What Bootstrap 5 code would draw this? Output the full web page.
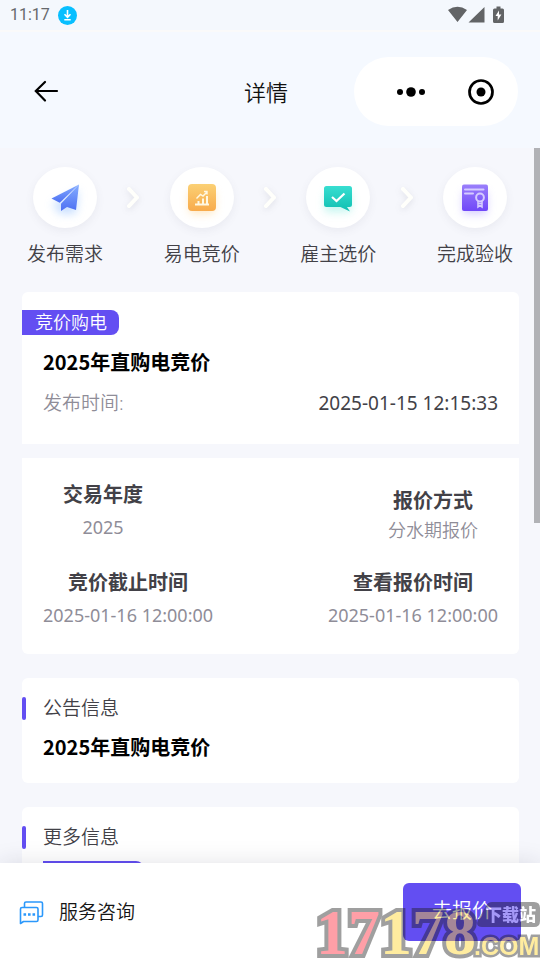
<!DOCTYPE html>
<html lang="zh-CN">
<head>
<meta charset="utf-8">
<meta name="viewport" content="width=device-width, initial-scale=1">
<title>详情</title>
<link href="https://cdn.jsdelivr.net/npm/bootstrap@5.3.0/dist/css/bootstrap.min.css" rel="stylesheet">
<style>
  :root { --brand: #634ef2; --page: #f6f7fc; --bar: #f5f9ff; --ink: #424147; --soft: #8f8d98; }
  body { font-family: "Noto Sans", "Noto Sans CJK SC", sans-serif; font-size: 19px; line-height: 28px; color: var(--ink); background: var(--page); }
  .status-bar { height: 32px; background: #f4f8fd; border-bottom: 2px solid #fafafa; padding: 0 36px 0 10px; color: #66696c; }
  .clock { font: 400 16px/30px Roboto, sans-serif; }
  .app-bar { display: grid; grid-template-columns: 1fr auto 1fr; background: var(--bar); padding: 25px 22px 22px 14px; }
  .page-title { font-size: 22px; line-height: 32px; font-weight: 350; color: #111; }
  .capsule { width: 164px; height: 69px; background: #fff; border-radius: 35px; }
  .plain { border: 0; background: none; padding: 0; line-height: 1; color: #000; }
  .content { padding: 19px 21px 0 22px; }
  .scroll-thumb { top: 0; right: 0; width: 6px; height: 52.5%; background: #b1b2b6; }
  .steps { padding: 0 6px 0 5px; margin-bottom: 24px; }
  .step-dot { width: 64px; height: 61px; border-radius: 50%; background: #fff; box-shadow: 0 3px 8px rgba(90, 90, 120, .08); }
  .step-dot svg { overflow: visible; }
  .step-name { margin-top: 12px; font-weight: 350; }
  .arrow { margin-top: 18px; overflow: visible; filter: drop-shadow(0 2px 3px rgba(80, 80, 100, .14)); }
  .panel { background: #fff; border-radius: 6px; }
  .panel-top { border-radius: 6px 6px 0 0; padding: 18px 0 27px; margin-bottom: 14px; }
  .panel-facts { border-radius: 0 0 6px 6px; padding: 21px 21px 23px; margin-bottom: 24px; }
  .tag { display: inline-block; background: var(--brand); color: #fff; font-size: 18px; line-height: 25px; font-weight: 350; padding: 0 12px 0 13px; border-radius: 0 8px 8px 0; }
  .tag-blank { width: 101px; height: 25px; background: var(--brand); border-radius: 0 8px 8px 0; }
  .inset { padding: 0 21px; }
  .headline { font: 700 20px/30px "Noto Sans CJK SC", sans-serif; color: #000; margin: 0; }
  .muted { color: var(--soft); font-weight: 350; }
  .fact { text-align: center; }
  .fact dt { font-size: 20px; font-weight: 700; line-height: 32px; padding: 0 20px; }
  .fact dd { font-size: 18px; line-height: 32px; color: var(--soft); margin: 0; }
  .fact-tight dd { line-height: 26px; padding: 0 20px; font-weight: 350; }
  .panel-note { padding: 16px 0 21px; margin-bottom: 24px; }
  .note-name { font-size: 19px; line-height: 28px; font-weight: 350; margin: 0 0 10px; padding-right: 21px; gap: 17px; }
  .note-name::before { content: ""; width: 4px; height: 23px; background: var(--brand); border-radius: 2px; }
  .action-bar { background: #fff; padding: 20px 19px 19px; box-shadow: 0 0 22px rgba(30, 30, 60, .13); z-index: 2; }
  .ask { font-size: 19px; line-height: 28px; font-weight: 350; color: #151515; gap: 15px; }
  .offer { background: var(--brand); border: 0; color: #fff; border-radius: 6px; font-size: 20px; line-height: 30px; font-weight: 350; padding: 13px 29px 15px; }
  .stamp { right: 0; bottom: 0; width: 225px; height: 62px; opacity: .42; pointer-events: none; z-index: 3; }
</style>
</head>
<body>
<div class="vh-100 d-flex flex-column overflow-hidden position-relative">
  <div class="status-bar d-flex align-items-center justify-content-between flex-shrink-0">
    <div class="d-flex align-items-center gap-2">
      <span class="clock">11:17</span>
      <svg width="19" height="19" viewBox="0 0 19 19"><circle cx="9.500" cy="9.500" r="9.500" fill="#07bfff"/><path d="M9.500 4v7M6.500 8.300l3 3 3-3M6.300 13.700h6.400" fill="none" stroke="#fff" stroke-width="1.600"/></svg>
    </div>
    <svg width="56" height="18" viewBox="0 0 56 18" fill="#626466"><path d="M0 4Q9.500-2.500 19 4L9.500 16zM36.500 1v15.500h-16z"/><path d="M46.500 2.500h2V.500h4v2h2q1.500 0 1.500 1.500v11.500q0 1.500-1.500 1.500h-8Q45 17 45 15.500V4q0-1.500 1.500-1.500z"/><path d="M51 4.500l-3.500 5.500h2.200v4.500l3.700-6h-2.400z" fill="#fff"/></svg>
  </div>

  <header class="app-bar align-items-center flex-shrink-0">
    <button class="plain text-start ps-3" type="button" aria-label="返回">
      <svg width="32" height="24" viewBox="0 0 32 24" fill="none" stroke="#000" stroke-width="2.200" stroke-linecap="round"><path d="M6 11h21M15 2L5.800 11 15 20.500"/></svg>
    </button>
    <h1 class="page-title m-0">详情</h1>
    <div class="capsule d-flex align-items-center justify-content-between ms-auto ps-4">
      <button class="plain ms-3 ps-0" type="button" aria-label="更多"><svg width="34" height="28" viewBox="0 0 34 28"><circle cx="6" cy="14" r="3"/><circle cx="17" cy="14" r="4.800"/><circle cx="28" cy="14" r="3"/></svg></button>
      <button class="plain me-4" type="button" aria-label="关闭"><svg width="26" height="26" viewBox="0 0 26 26"><circle cx="13" cy="13" r="11.500" fill="none" stroke="#000" stroke-width="2.700"/><circle cx="13" cy="13" r="4.500"/></svg></button>
    </div>
  </header>

  <div class="flex-grow-1 overflow-hidden position-relative">
    <main class="content">
      <div class="steps d-flex justify-content-between align-items-start">
        <div class="d-flex flex-column align-items-center">
          <div class="step-dot d-flex align-items-center justify-content-center">
            <svg width="28" height="28" viewBox="0 0 28 28"><defs><linearGradient id="plane" x2="0" y2="1"><stop stop-color="#85adff"/><stop offset="1" stop-color="#4d70f3"/></linearGradient><filter id="soft" x="-50%" y="-50%" width="200%" height="200%"><feGaussianBlur stdDeviation="4"/></filter></defs><path d="M1 20L28 6 25 30H9z" fill="#b5d4ff" opacity=".7" filter="url(#soft)"/><path d="M28 .500L.500 14.500 8.700 18.700z" fill="url(#plane)"/><path d="M28 .500L10 19.700V27l6-4 9 3z" fill="url(#plane)"/></svg>
          </div>
          <div class="step-name">发布需求</div>
        </div>
        <svg class="arrow" width="14" height="24" viewBox="0 0 14 24" fill="none" stroke="#fffffb" stroke-width="4" stroke-linecap="round" stroke-linejoin="round"><path d="M3 4l8 8.500L3 21"/></svg>
        <div class="d-flex flex-column align-items-center">
          <div class="step-dot d-flex align-items-center justify-content-center">
            <svg width="28" height="28" viewBox="0 0 28 28"><defs><linearGradient id="gold" x2="0" y2="1"><stop stop-color="#fbd074"/><stop offset="1" stop-color="#f8ab4c"/></linearGradient></defs><rect x="1" y="6" width="26" height="24" rx="5" fill="#ffd99b" opacity=".6" filter="url(#soft)"/><rect width="28" height="27" rx="4" fill="url(#gold)"/><path d="M7 20.500h14M10.500 20v-3M15 20v-5.500M19 20v-8" fill="none" stroke="#fff8e2" stroke-width="2"/><path d="M8.500 14.500l4-4 2.500 1.500 4-4M16 7.500h3v3" fill="none" stroke="#fff8e2" stroke-width="1.400"/></svg>
          </div>
          <div class="step-name">易电竞价</div>
        </div>
        <svg class="arrow" width="14" height="24" viewBox="0 0 14 24" fill="none" stroke="#fffffb" stroke-width="4" stroke-linecap="round" stroke-linejoin="round"><path d="M3 4l8 8.500L3 21"/></svg>
        <div class="d-flex flex-column align-items-center">
          <div class="step-dot d-flex align-items-center justify-content-center">
            <svg width="28" height="26" viewBox="0 0 28 26"><defs><linearGradient id="teal" x2="0" y2="1"><stop stop-color="#38ded1"/><stop offset="1" stop-color="#0fbfb1"/></linearGradient></defs><rect x="1" y="8" width="26" height="19" fill="#9ff0e5" opacity=".6" filter="url(#soft)"/><path d="M2.500 1h23Q28 1 28 3.500v16q0 2.500-2.500 2.500H23l3 4.500L16.500 22h-14Q0 22 0 19.500v-16Q0 1 2.500 1z" fill="url(#teal)"/><path d="M8 12l4.500 4 8-7.500" fill="none" stroke="#fff" stroke-width="2.200"/></svg>
          </div>
          <div class="step-name">雇主选价</div>
        </div>
        <svg class="arrow" width="14" height="24" viewBox="0 0 14 24" fill="none" stroke="#fffffb" stroke-width="4" stroke-linecap="round" stroke-linejoin="round"><path d="M3 4l8 8.500L3 21"/></svg>
        <div class="d-flex flex-column align-items-center">
          <div class="step-dot d-flex align-items-center justify-content-center">
            <svg width="26" height="28" viewBox="0 0 26 28"><defs><linearGradient id="violet" x2="0" y2="1"><stop stop-color="#9a7ffb"/><stop offset="1" stop-color="#7048f8"/></linearGradient></defs><rect x="1" y="8" width="24" height="22" fill="#b9adff" opacity=".6" filter="url(#soft)"/><rect y=".500" width="26" height="26.500" rx="2" fill="url(#violet)"/><path d="M3 5.500h18.500M3 9.500h8" stroke="#d5ccff" stroke-width="2" stroke-linecap="round"/><circle cx="18" cy="13.500" r="3.900" fill="none" stroke="#d5ccff" stroke-width="2"/><path d="M16 17v6l2-1.500 2 1.500v-6M16 19.500h4" fill="none" stroke="#d5ccff" stroke-width="1.600"/></svg>
          </div>
          <div class="step-name">完成验收</div>
        </div>
      </div>

      <section class="panel panel-top">
        <div class="d-flex"><span class="tag">竞价购电</span></div>
        <div class="inset">
          <h2 class="headline mt-2 pt-1">2025年直购电竞价</h2>
          <div class="d-flex justify-content-between mt-2 pt-1">
            <span class="muted">发布时间:</span>
            <time datetime="2025-01-15T12:15:33">2025-01-15 12:15:33</time>
          </div>
        </div>
      </section>

      <section class="panel panel-facts d-flex flex-column gap-4">
        <div class="d-flex justify-content-between align-items-end">
          <dl class="fact m-0"><dt>交易年度</dt><dd>2025</dd></dl>
          <dl class="fact fact-tight m-0"><dt>报价方式</dt><dd>分水期报价</dd></dl>
        </div>
        <div class="d-flex justify-content-between align-items-end">
          <dl class="fact m-0"><dt>竞价截止时间</dt><dd>2025-01-16 12:00:00</dd></dl>
          <dl class="fact m-0"><dt>查看报价时间</dt><dd>2025-01-16 12:00:00</dd></dl>
        </div>
      </section>

      <section class="panel panel-note">
        <h3 class="note-name d-flex align-items-center">公告信息</h3>
        <div class="inset"><p class="headline">2025年直购电竞价</p></div>
      </section>

      <section class="panel panel-note">
        <h3 class="note-name d-flex align-items-center">更多信息</h3>
        <div class="inset"><div class="tag-blank"></div></div>
      </section>
    </main>
    <div class="scroll-thumb position-absolute"></div>
  </div>

  <footer class="action-bar d-flex align-items-center justify-content-between flex-shrink-0 position-relative">
    <button class="plain ask d-flex align-items-center" type="button">
      <svg width="25" height="25" viewBox="0 0 25 25" fill="none" stroke="#2b98fb" stroke-width="1.600" stroke-linejoin="round"><path d="M5.500 7V3.500Q5.500 2 7 2h15q1.500 0 1.500 1.500v11.500q0 1.500-1.500 1.500h-3"/><path d="M3 7.500h14.500Q19 7.500 19 9v11q0 1.500-1.500 1.500H4.500L1.500 23.500V9Q1.500 7.500 3 7.500z"/><path d="M4.500 14.500h2.600M9 14.500h2.600M13.500 14.500h2.600" stroke-width="2.600"/></svg>
      <span>服务咨询</span>
    </button>
    <button class="offer btn" type="button">去报价</button>
  </footer>

  <svg class="stamp position-absolute" viewBox="0 0 225 62" role="img" aria-label="17178.COM 下载站">
    <path d="M163 22l8-14q2-4 6-4h42q6 0 6 6v13q0 6-6 6h-52q-7 0-4-7z" fill="#1c1c1c"/>
    <g font-family="Liberation Serif, serif" font-weight="700" font-size="64" stroke-linejoin="miter" paint-order="stroke" stroke="#1c1c1c" stroke-width="8">
      <text x="1" y="56" fill="#ff1d30">17<tspan fill="#ffd41d">178</tspan></text>
    </g>
    <text x="159" y="57" font-family="Liberation Sans, sans-serif" font-weight="700" font-size="25" fill="#ffd41d" stroke="#1c1c1c" stroke-width="5" paint-order="stroke">.COM</text>
    <text x="170" y="23" font-family="Noto Sans CJK SC, sans-serif" font-weight="900" font-size="17" fill="#fff">下载站</text>
  </svg>
</div>
<script src="https://cdn.jsdelivr.net/npm/bootstrap@5.3.0/dist/js/bootstrap.bundle.min.js"></script>
</body>
</html>
